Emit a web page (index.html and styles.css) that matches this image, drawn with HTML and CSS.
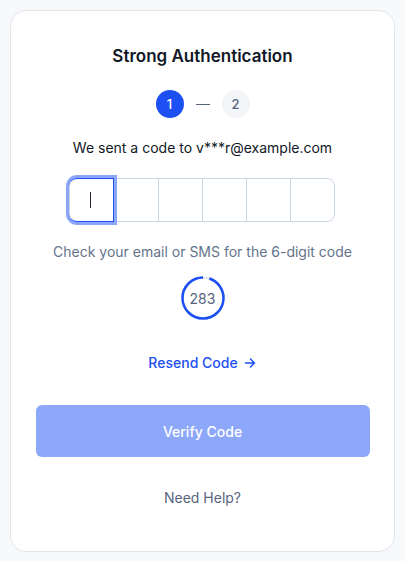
FILE: index.html
```html
<!DOCTYPE html>
<html lang="en">
<head>
<meta charset="utf-8">
<title>Strong Authentication</title>
<link rel="stylesheet" href="styles.css">
</head>
<body>
<main class="card">
  <h1 class="title">Strong Authentication</h1>
  <div class="steps">
    <span class="step step-active">1</span>
    <span class="step-line"></span>
    <span class="step step-idle">2</span>
  </div>
  <p class="sent">We sent a code to v***r@example.com</p>
  <div class="otp">
    <div class="cell cell-focus"><span class="caret"></span></div>
    <div class="cell"></div>
    <div class="cell"></div>
    <div class="cell"></div>
    <div class="cell"></div>
    <div class="cell"></div>
  </div>
  <p class="hint">Check your email or SMS for the 6-digit code</p>
  <div class="timer">
    <svg class="timer-ring" width="44" height="44" viewBox="0 0 44 44">
      <circle cx="22" cy="22" r="20.5" fill="none" stroke="#e5e9f0" stroke-width="2.5"/>
      <circle cx="22" cy="22" r="20.5" fill="none" stroke="#1d50f2" stroke-width="2.5"
        stroke-dasharray="121.5 200" transform="rotate(-90 22 22) scale(1 -1) translate(0 -44)"/>
    </svg>
    <span class="timer-text">283</span>
  </div>
  <a class="resend" href="#">Resend Code
    <svg class="arrow" width="14" height="14" viewBox="0 0 14 14"><path d="M2.5 7h9M7.5 3l4 4-4 4" fill="none" stroke="currentColor" stroke-width="1.5" stroke-linecap="round" stroke-linejoin="round"/></svg>
  </a>
  <button class="verify" type="button">Verify Code</button>
  <a class="help" href="#">Need Help?</a>
</main>
</body>
</html>
```

FILE: styles.css
```css
* { box-sizing: border-box; }
html, body { margin: 0; padding: 0; }
body {
  background: #f8f9fb;
  font-family: Inter, "Noto Sans", sans-serif;
  padding: 10px;
  height: 561px;
}
.card {
  background: #fff;
  border: 1px solid #e2e6ec;
  border-radius: 16px;
  width: 385px;
  height: 542px;
  padding: 33px 24px 0;
  display: flex;
  flex-direction: column;
  align-items: center;
}
.title {
  margin: 0;
  font-size: 17px;
  line-height: 24px;
  font-weight: 600;
  color: #111827;
}
.steps {
  margin-top: 22px;
  display: flex;
  align-items: center;
  gap: 12px;
}
.step {
  width: 28px;
  height: 28px;
  border-radius: 50%;
  display: flex;
  align-items: center;
  justify-content: center;
  font-size: 13px;
  font-weight: 500;
}
.step-active { background: #1d50f2; color: #fff; }
.step-idle { background: #f3f5f8; color: #56657d; }
.step-line { width: 14px; height: 1px; background: #56657d; }
.sent {
  margin: 20px 0 0;
  font-size: 14px;
  line-height: 20px;
  color: #111827;
}
.otp {
  margin-top: 20px;
  display: flex;
  border: 1px solid #c9d4e1;
  border-radius: 8px;
  height: 44px;
  margin-left: -2px;
}
.cell {
  width: 44px;
  height: 42px;
  border-left: 1px solid #c9d4e1;
  display: flex;
  align-items: center;
  justify-content: center;
}
.cell:first-child { border-left: none; }
.cell-focus {
  margin: -1px 0 -1px -1px;
  width: 45px;
  height: 44px;
  border: 1.5px solid #1d50f2;
  border-radius: 8px 0 0 8px;
  box-shadow: 0 0 0 3px #8ba6f9;
  position: relative;
  z-index: 1;
}
.caret {
  width: 1px;
  height: 16px;
  background: #1f2937;
}
.hint {
  margin: 20px 0 0;
  font-size: 14px;
  line-height: 20px;
  color: #64748b;
}
.timer {
  margin-top: 14px;
  width: 44px;
  height: 44px;
  position: relative;
  display: flex;
  align-items: center;
  justify-content: center;
}
.timer-ring { position: absolute; left: 0; top: 0; }
.timer-text {
  font-size: 14px;
  color: #56657d;
  position: relative;
}
.resend {
  margin-top: 33px;
  display: flex;
  align-items: center;
  gap: 5px;
  font-size: 14px;
  line-height: 20px;
  font-weight: 500;
  color: #1d50f2;
  text-decoration: none;
}
.verify {
  margin-top: 32px;
  width: 334px;
  height: 52px;
  border: none;
  border-radius: 6px;
  background: #8da7fa;
  color: #fff;
  font-family: inherit;
  font-size: 14px;
  font-weight: 500;
}
.help {
  margin-top: 31px;
  font-size: 14px;
  line-height: 20px;
  color: #56657d;
  text-decoration: none;
}
```
